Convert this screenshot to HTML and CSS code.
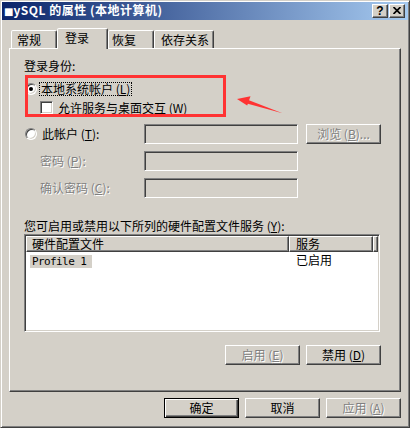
FILE: index.html
```html
<!DOCTYPE html>
<html>
<head>
<meta charset="utf-8">
<link rel="stylesheet" href="styles.css">
</head>
<body>
<div class="window">
  <div class="caption">
    <span class="caption-title"><span class="sq">■</span>ySQL 的属性 (本地计算机)</span>
    <div class="caption-buttons">
      <span class="cbtn help">?</span>
      <span class="cbtn close"><svg width="8" height="7" viewBox="0 0 8 7"><path d="M0.5 0 L7.5 7 M7.5 0 L0.5 7" stroke="#000" stroke-width="1.7" fill="none"/></svg></span>
    </div>
  </div>
  <div class="tabs">
    <div class="tab t1">常规</div>
    <div class="tab t2 active">登录</div>
    <div class="tab t3">恢复</div>
    <div class="tab t4">依存关系</div>
  </div>
  <div class="panel">
    <div class="lbl lbl-top">登录身份:</div>
    <div class="radio-row">
      <span class="radio checked"></span>
      <span class="focus">本地系统帐户 (<u>L</u>)</span>
    </div>
    <div class="check-row">
      <span class="checkbox"></span>
      <span class="lbl">允许服务与桌面交互 (<u>W</u>)</span>
    </div>
    <div class="field-row r1">
      <div class="field-label"><span class="radio"></span><span class="lbl">此帐户 (<u>T</u>):</span></div>
      <div class="textbox"></div>
      <div class="button disabled">浏览 (<u>B</u>)...</div>
    </div>
    <div class="field-row r2">
      <div class="field-label indent disabled">密码 (<u>P</u>):</div>
      <div class="textbox"></div>
    </div>
    <div class="field-row r3">
      <div class="field-label indent disabled">确认密码 (<u>C</u>):</div>
      <div class="textbox"></div>
    </div>
    <div class="lbl lbl-hw">您可启用或禁用以下所列的硬件配置文件服务 (<u>Y</u>):</div>
    <div class="listview">
      <div class="lv-header">
        <div class="hd c1">硬件配置文件</div>
        <div class="hd c2">服务</div>
        <div class="hd c3"></div>
      </div>
      <div class="lv-row">
        <div class="cell c1"><span class="sel">Profile 1</span></div>
        <div class="cell c2">已启用</div>
      </div>
    </div>
    <div class="panel-buttons">
      <div class="button disabled">启用 (<u>E</u>)</div>
      <div class="button">禁用 (<u>D</u>)</div>
    </div>
  </div>
  <div class="dialog-buttons">
    <div class="button default">确定</div>
    <div class="button">取消</div>
    <div class="button disabled">应用 (<u>A</u>)</div>
  </div>
  <div class="annot-rect"></div>
  <svg class="annot-arrow" width="60" height="30" viewBox="0 0 60 30">
    <polygon points="7,9 20.5,6.3 17.2,15.5" fill="#F33"/>
    <polygon points="17,9.6 52.5,23.2 16,13.2" fill="#F33"/>
  </svg>
</div>
</body>
</html>
```

FILE: styles.css
```css
* { box-sizing: border-box; }
html, body { margin: 0; padding: 0; }
body {
  background: #D4D0C8;
  font-family: "Noto Sans CJK SC", "Liberation Sans", sans-serif;
  font-size: 12px;
  line-height: 14px;
  color: #000;
}
u { text-decoration: underline; }

.window {
  position: relative;
  width: 410px;
  height: 428px;
  padding: 1px;
  background: #D4D0C8;
  border: 1px solid;
  border-color: #D4D0C8 #404040 #404040 #D4D0C8;
  box-shadow: inset 1px 1px #fff, inset -1px -1px #808080;
}

/* caption */
.caption {
  display: flex;
  align-items: center;
  height: 18px;
  padding-left: 2px;
  background: linear-gradient(to right, #0A246A, #A6CAF0);
}
.caption-title {
  color: #fff;
  font-weight: bold;
  font-size: 12px;
  line-height: 14px;
  letter-spacing: 0.5px;
  white-space: nowrap;
}
.caption-title .sq {
  font-family: "DejaVu Sans", sans-serif;
  font-size: 10px;
  letter-spacing: 0;
}
.caption-buttons {
  margin-left: auto;
  margin-right: 3px;
  display: flex;
  gap: 1px;
}
.cbtn {
  width: 16px;
  height: 14px;
  background: #D4D0C8;
  border: 1px solid;
  border-color: #fff #404040 #404040 #fff;
  box-shadow: inset -1px -1px #808080;
  display: flex;
  align-items: center;
  justify-content: center;
}
.cbtn.help {
  font-family: "Liberation Sans", sans-serif;
  font-weight: bold;
  font-size: 12px;
  line-height: 12px;
  padding-bottom: 1px;
}
.cbtn.close svg { display: block; margin-bottom: 1px; }

/* tabs */
.tabs {
  display: flex;
  align-items: flex-end;
  height: 20px;
  margin: 8px 0 0 9px;
  position: relative;
  z-index: 2;
}
.tab {
  height: 18px;
  border: 1px solid;
  border-bottom: none;
  border-color: #fff #404040 transparent #fff;
  box-shadow: inset -1px 0 #808080;
  border-radius: 2px 2px 0 0;
  line-height: 17px;
  white-space: nowrap;
  background: #D4D0C8;
}
.tab.active {
  height: 21px;
  margin-bottom: -1px;
  line-height: 18px;
}
.t1 { width: 46px; padding-left: 5px; }
.t2 { width: 51px; padding-left: 7px; }
.t3 { width: 46px; padding-left: 3px; }
.t4 { width: 60px; padding-left: 6px; }

/* panel */
.panel {
  margin: 0 7px;
  height: 344px;
  border: 1px solid;
  border-color: #fff #404040 #404040 #fff;
  box-shadow: inset -1px -1px #808080;
  display: flex;
  flex-direction: column;
  align-items: flex-start;
}
.lbl { white-space: nowrap; }
.lbl-top { margin: 10px 0 0 14px; }

.radio {
  position: relative;
  display: inline-block;
  flex: none;
  width: 12px;
  height: 12px;
  border-radius: 50%;
  background: #fff;
  border: 1px solid;
  border-color: #808080 #fff #fff #808080;
  box-shadow: inset 1px 1px #404040, inset -1px -1px #D4D0C8;
}
.radio.checked::after {
  content: "";
  position: absolute;
  left: 3px;
  top: 3px;
  width: 4px;
  height: 4px;
  border-radius: 50%;
  background: #000;
}
.radio-row {
  display: flex;
  align-items: center;
  height: 14px;
  margin: 9px 0 0 15px;
}
.radio-row .radio { margin-right: 2px; }
.focus {
  border: 1px dotted #000;
  padding: 0 1px;
  height: 14px;
  line-height: 12px;
  white-space: nowrap;
}

.check-row {
  display: flex;
  align-items: center;
  height: 13px;
  margin: 5px 0 0 30px;
}
.checkbox {
  flex: none;
  width: 13px;
  height: 13px;
  margin-right: 5px;
  background: #fff;
  border: 1px solid;
  border-color: #808080 #fff #fff #808080;
  box-shadow: inset 1px 1px #404040, inset -1px -1px #D4D0C8;
}

.field-row {
  display: flex;
  align-items: center;
  height: 20px;
  margin: 10px 0 0 15px;
}
.field-row.r2, .field-row.r3 { margin-top: 7px; }
.field-label {
  width: 119px;
  display: flex;
  align-items: center;
  white-space: nowrap;
}
.field-label .radio { margin-right: 5px; }
.field-label.indent { padding-left: 15px; }
.textbox {
  width: 154px;
  height: 20px;
  background: #D4D0C8;
  border: 1px solid;
  border-color: #808080 #fff #fff #808080;
  box-shadow: inset 1px 1px #404040, inset -1px -1px #D4D0C8;
}
.field-row .button { margin-left: 8px; }

.lbl-hw { margin: 21px 0 0 14px; }

/* list view */
.listview {
  margin: 1px 0 0 14px;
  width: 356px;
  height: 98px;
  padding: 1px;
  background: #fff;
  border: 1px solid;
  border-color: #808080 #fff #fff #808080;
  box-shadow: inset 1px 1px #404040, inset -1px -1px #D4D0C8;
}
.lv-header { display: flex; height: 16px; }
.hd {
  height: 16px;
  background: #D4D0C8;
  border: 1px solid;
  border-color: #fff #404040 #404040 #fff;
  box-shadow: inset -1px -1px #808080;
  line-height: 14px;
  white-space: nowrap;
}
.hd.c1 { width: 263px; padding-left: 5px; }
.hd.c2 { width: 84px; padding-left: 6px; }
.hd.c3 { flex: 1; }
.lv-row {
  display: flex;
  height: 13px;
  margin-top: 1px;
  line-height: 13px;
}
.cell { white-space: nowrap; }
.cell.c1 { width: 263px; padding-left: 4px; }
.cell.c2 { padding-left: 7px; }
.sel {
  display: inline-block;
  height: 13px;
  padding: 0 6px 0 2px;
  background: #D4D0C8;
  font-family: "DejaVu Sans Mono", "Liberation Mono", monospace;
  font-size: 11px;
  letter-spacing: -0.6px;
  line-height: 13px;
}

.panel-buttons {
  display: flex;
  gap: 6px;
  margin: 13px 0 0 215px;
}

/* buttons */
.button {
  flex: none;
  width: 75px;
  height: 20px;
  display: flex;
  align-items: center;
  justify-content: center;
  background: #D4D0C8;
  border: 1px solid;
  border-color: #fff #404040 #404040 #fff;
  box-shadow: inset -1px -1px #808080;
  white-space: nowrap;
}
.button.default {
  border-color: #000;
  box-shadow: inset 1px 1px #fff, inset -1px -1px #404040, inset -2px -2px #808080;
}
.disabled {
  color: #808080;
  text-shadow: 1px 1px 0 #fff;
}

.dialog-buttons {
  display: flex;
  justify-content: flex-end;
  gap: 6px;
  margin: 6px 7px 0 0;
}

/* annotation overlay */
.annot-rect {
  position: absolute;
  left: 24px;
  top: 74px;
  width: 201px;
  height: 42px;
  border: 3px solid #F33;
}
.annot-arrow {
  position: absolute;
  left: 229px;
  top: 89px;
}
```
